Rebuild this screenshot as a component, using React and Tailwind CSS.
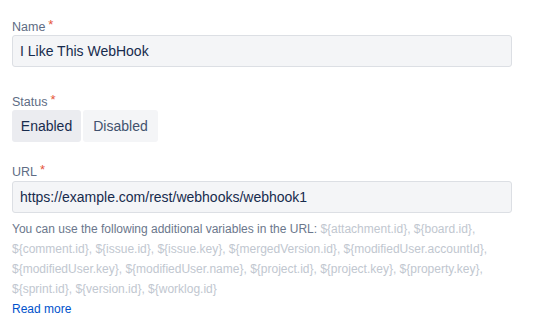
import React from "react";

function Label({ children }) {
  return (
    <div className="flex items-start text-[12.5px] leading-[16px] font-normal text-[#5e6c84]">
      <span>{children}</span>
      <span className="ml-[3px] text-[#e5553a] text-[13px] leading-[11px]">*</span>
    </div>
  );
}

function Var({ children }) {
  return <span className="text-[#c1c7d0]">{children}</span>;
}

export default function App() {
  return (
    <div className="w-[533px] h-[334px] bg-white px-3 pt-[19px] font-['Liberation_Sans',Arial,sans-serif]">
      <div className="w-[500px]">
        <Label>Name</Label>
        <div className="h-[32px] rounded-[3px] border border-[#dcdfe4] bg-[#f4f5f7] flex items-center px-[7px] text-[14px] text-[#172b4d]">
          I Like This WebHook
        </div>

        <div className="mt-[27px]">
          <Label>Status</Label>
          <div className="flex gap-[2px]">
            <div className="h-[32px] w-[69px] rounded-[3px] bg-[#ebecf0] flex items-center justify-center text-[14px] text-[#172b4d]">
              Enabled
            </div>
            <div className="h-[32px] w-[75px] rounded-[3px] bg-[#f4f5f7] flex items-center justify-center text-[14px] text-[#42526e]">
              Disabled
            </div>
          </div>
        </div>

        <div className="mt-[22px]">
          <Label>URL</Label>
          <div className="mt-px h-[32px] rounded-[3px] border border-[#dcdfe4] bg-[#f4f5f7] flex items-center px-[7px] text-[14px] text-[#172b4d]">
            https://example.com/rest/webhooks/webhook1
          </div>
        </div>

        <div className="mt-[6px] text-[12px] leading-[20px] text-[#6b778c] whitespace-nowrap">
          <div>
            You can use the following additional variables in the URL: <Var>{"${attachment.id}, ${board.id},"}</Var>
          </div>
          <div>
            <Var>{"${comment.id}, ${issue.id}, ${issue.key}, ${mergedVersion.id}, ${modifiedUser.accountId},"}</Var>
          </div>
          <div>
            <Var>{"${modifiedUser.key}, ${modifiedUser.name}, ${project.id}, ${project.key}, ${property.key},"}</Var>
          </div>
          <div>
            <Var>{"${sprint.id}, ${version.id}, ${worklog.id}"}</Var>
          </div>
          <div>
            <span className="text-[#0052cc]">Read more</span>
          </div>
        </div>
      </div>
    </div>
  );
}
